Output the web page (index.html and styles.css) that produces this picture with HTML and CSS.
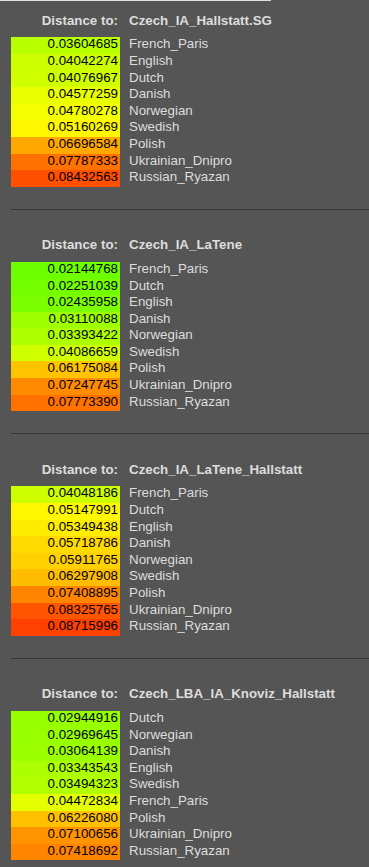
FILE: index.html
```html
<!DOCTYPE html>
<html>
<head>
<meta charset="utf-8">
<link rel="stylesheet" href="styles.css">
</head>
<body>
<div class="topline"></div>

<section class="block">
  <div class="head"><span class="label">Distance to:</span><span class="target">Czech_IA_Hallstatt.SG</span></div>
  <div class="row"><span class="val" style="background:hsl(76.74,100%,50%)">0.03604685</span><span class="pop">French_Paris</span></div>
  <div class="row"><span class="val" style="background:hsl(71.49,100%,50%)">0.04042274</span><span class="pop">English</span></div>
  <div class="row"><span class="val" style="background:hsl(71.08,100%,50%)">0.04076967</span><span class="pop">Dutch</span></div>
  <div class="row"><span class="val" style="background:hsl(65.07,100%,50%)">0.04577259</span><span class="pop">Danish</span></div>
  <div class="row"><span class="val" style="background:hsl(62.64,100%,50%)">0.04780278</span><span class="pop">Norwegian</span></div>
  <div class="row"><span class="val" style="background:hsl(58.08,100%,50%)">0.05160269</span><span class="pop">Swedish</span></div>
  <div class="row"><span class="val" style="background:hsl(39.64,100%,50%)">0.06696584</span><span class="pop">Polish</span></div>
  <div class="row"><span class="val" style="background:hsl(26.55,100%,50%)">0.07787333</span><span class="pop">Ukrainian_Dnipro</span></div>
  <div class="row"><span class="val" style="background:hsl(18.81,100%,50%)">0.08432563</span><span class="pop">Russian_Ryazan</span></div>
</section>

<section class="block">
  <div class="head"><span class="label">Distance to:</span><span class="target">Czech_IA_LaTene</span></div>
  <div class="row"><span class="val" style="background:hsl(94.26,100%,50%)">0.02144768</span><span class="pop">French_Paris</span></div>
  <div class="row"><span class="val" style="background:hsl(92.99,100%,50%)">0.02251039</span><span class="pop">Dutch</span></div>
  <div class="row"><span class="val" style="background:hsl(90.77,100%,50%)">0.02435958</span><span class="pop">English</span></div>
  <div class="row"><span class="val" style="background:hsl(82.68,100%,50%)">0.03110088</span><span class="pop">Danish</span></div>
  <div class="row"><span class="val" style="background:hsl(79.28,100%,50%)">0.03393422</span><span class="pop">Norwegian</span></div>
  <div class="row"><span class="val" style="background:hsl(70.96,100%,50%)">0.04086659</span><span class="pop">Swedish</span></div>
  <div class="row"><span class="val" style="background:hsl(45.90,100%,50%)">0.06175084</span><span class="pop">Polish</span></div>
  <div class="row"><span class="val" style="background:hsl(33.03,100%,50%)">0.07247745</span><span class="pop">Ukrainian_Dnipro</span></div>
  <div class="row"><span class="val" style="background:hsl(26.72,100%,50%)">0.07773390</span><span class="pop">Russian_Ryazan</span></div>
</section>

<section class="block">
  <div class="head"><span class="label">Distance to:</span><span class="target">Czech_IA_LaTene_Hallstatt</span></div>
  <div class="row"><span class="val" style="background:hsl(71.42,100%,50%)">0.04048186</span><span class="pop">French_Paris</span></div>
  <div class="row"><span class="val" style="background:hsl(58.22,100%,50%)">0.05147991</span><span class="pop">Dutch</span></div>
  <div class="row"><span class="val" style="background:hsl(55.81,100%,50%)">0.05349438</span><span class="pop">English</span></div>
  <div class="row"><span class="val" style="background:hsl(51.37,100%,50%)">0.05718786</span><span class="pop">Danish</span></div>
  <div class="row"><span class="val" style="background:hsl(49.06,100%,50%)">0.05911765</span><span class="pop">Norwegian</span></div>
  <div class="row"><span class="val" style="background:hsl(44.43,100%,50%)">0.06297908</span><span class="pop">Swedish</span></div>
  <div class="row"><span class="val" style="background:hsl(31.09,100%,50%)">0.07408895</span><span class="pop">Polish</span></div>
  <div class="row"><span class="val" style="background:hsl(20.09,100%,50%)">0.08325765</span><span class="pop">Ukrainian_Dnipro</span></div>
  <div class="row"><span class="val" style="background:hsl(15.41,100%,50%)">0.08715996</span><span class="pop">Russian_Ryazan</span></div>
</section>

<section class="block">
  <div class="head"><span class="label">Distance to:</span><span class="target">Czech_LBA_IA_Knoviz_Hallstatt</span></div>
  <div class="row"><span class="val" style="background:hsl(84.66,100%,50%)">0.02944916</span><span class="pop">Dutch</span></div>
  <div class="row"><span class="val" style="background:hsl(84.36,100%,50%)">0.02969645</span><span class="pop">Norwegian</span></div>
  <div class="row"><span class="val" style="background:hsl(83.23,100%,50%)">0.03064139</span><span class="pop">Danish</span></div>
  <div class="row"><span class="val" style="background:hsl(79.88,100%,50%)">0.03343543</span><span class="pop">English</span></div>
  <div class="row"><span class="val" style="background:hsl(78.07,100%,50%)">0.03494323</span><span class="pop">Swedish</span></div>
  <div class="row"><span class="val" style="background:hsl(66.33,100%,50%)">0.04472834</span><span class="pop">French_Paris</span></div>
  <div class="row"><span class="val" style="background:hsl(45.29,100%,50%)">0.06226080</span><span class="pop">Polish</span></div>
  <div class="row"><span class="val" style="background:hsl(34.79,100%,50%)">0.07100656</span><span class="pop">Ukrainian_Dnipro</span></div>
  <div class="row"><span class="val" style="background:hsl(30.98,100%,50%)">0.07418692</span><span class="pop">Russian_Ryazan</span></div>
</section>
</body>
</html>
```

FILE: styles.css
```css
html, body {
  margin: 0;
  padding: 0;
  background: #555555;
}

body {
  font-family: "Liberation Sans", Arial, sans-serif;
  font-size: 13.33px;
  color: #dddddd;
}

.topline {
  width: 271px;
  height: 1px;
  background: #e0e0e0;
}

.block {
  margin-left: 11px;
  padding: 28.4px 0 22.2px 0;
}

.block:first-of-type {
  padding-top: 12.8px;
}

.block + .block {
  border-top: 1px solid #363636;
}

.head {
  display: flex;
  line-height: 14.6px;
  font-weight: bold;
  margin-bottom: 9px;
  white-space: nowrap;
}

.label {
  width: 109px;
  box-sizing: border-box;
  text-align: right;
  padding-right: 2px;
}

.target {
  margin-left: 9px;
}

.row {
  display: flex;
  height: 16.6px;
  white-space: nowrap;
}

.val {
  width: 109px;
  box-sizing: border-box;
  text-align: right;
  padding-right: 2px;
  padding-bottom: 2px;
  line-height: 14.6px;
  color: #000000;
}

.pop {
  margin-left: 9px;
  line-height: 14.6px;
}
```
